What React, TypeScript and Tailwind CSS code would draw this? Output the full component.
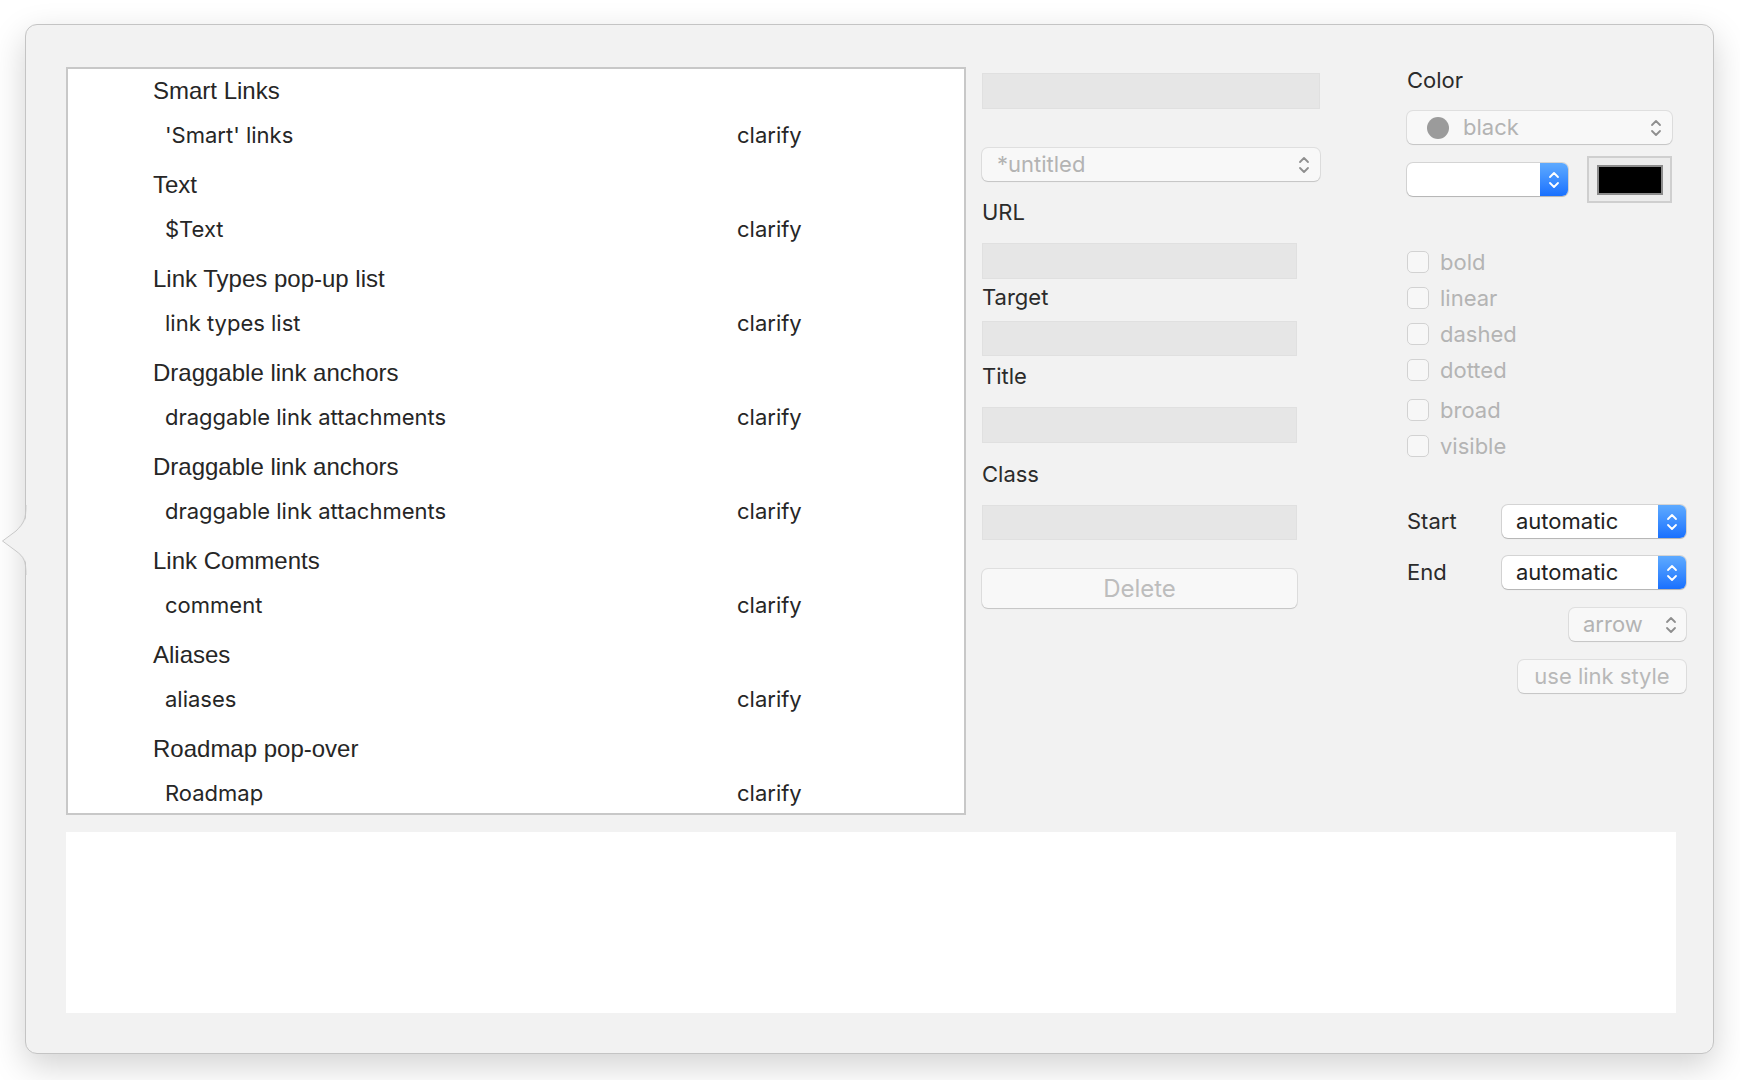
import React from "react";

// 链接检查器面板（popover），左侧为大纲列表，右侧为属性控件
const rows: { heading: string; child: string }[] = [
  { heading: "Smart Links", child: "'Smart' links" },
  { heading: "Text", child: "$Text" },
  { heading: "Link Types pop-up list", child: "link types list" },
  { heading: "Draggable link anchors", child: "draggable link attachments" },
  { heading: "Draggable link anchors", child: "draggable link attachments" },
  { heading: "Link Comments", child: "comment" },
  { heading: "Aliases", child: "aliases" },
  { heading: "Roadmap pop-over", child: "Roadmap" },
];

const sf = "font-['Inter','Liberation_Sans',sans-serif]";

const Chevrons = ({ color = "#8e8e8e" }: { color?: string }) => (
  <svg width="12" height="20" viewBox="0 0 12 20" fill="none">
    <path d="M2 7 L6 3 L10 7" stroke={color} strokeWidth="1.8" strokeLinecap="round" strokeLinejoin="round" />
    <path d="M2 13 L6 17 L10 13" stroke={color} strokeWidth="1.8" strokeLinecap="round" strokeLinejoin="round" />
  </svg>
);

const Field = ({ w, h = "h-[36px]", mt }: { w: string; h?: string; mt: string }) => (
  <div className={`${w} ${h} ${mt} bg-[#e6e6e6] border border-[#e0e0e0]`} />
);

const Label = ({ text, mt }: { text: string; mt: string }) => (
  <div className={`${mt} h-[26px] leading-[26px] text-[22px] text-[#2b2b2b] ${sf}`}>{text}</div>
);

const BluePopup = ({ value, w }: { value: string; w: string }) => (
  <div className={`${w} h-[33px] flex rounded-[6px] bg-white shadow-[0_0_0_1px_rgba(0,0,0,0.12),0_1px_1px_rgba(0,0,0,0.15)] overflow-hidden`}>
    <div className={`flex-1 flex items-center pl-[14px] text-[22px] text-[#222] ${sf}`}>{value}</div>
    <div className="w-[28px] flex items-center justify-center bg-gradient-to-b from-[#5eaaff] to-[#1970fe]">
      <Chevrons color="#ffffff" />
    </div>
  </div>
);

const Check = ({ label }: { label: string }) => (
  <div className="h-[36px] flex items-center">
    <div className="w-[22px] h-[22px] rounded-[5px] bg-[#f7f7f7] border border-[#d2d2d2]" />
    <span className={`ml-[11px] text-[22px] text-[#b4b4b4] ${sf}`}>{label}</span>
  </div>
);

export default function App() {
  return (
    <div className="w-[1740px] h-[1080px] bg-white overflow-hidden pt-[24px] pl-[25px]">
      <div className="relative w-[1689px] h-[1030px] bg-[#f2f2f2] rounded-[12px] border border-[#c4c4c4] shadow-[0_12px_34px_rgba(0,0,0,0.18)] pl-[40px] pt-[42px]">
        {/* popover 箭头 */}
        <svg className="absolute left-[-25px] top-[480px]" width="27" height="70" viewBox="0 0 27 70">
          <path d="M26 0 C26 14 24 18 16 26 L2 36 L16 46 C24 52 26 56 26 70 Z" fill="#f2f2f2" />
          <path d="M25 0 C25 14 23 18 15 26 L1.5 36 L15 46 C23 52 25 56 25 70" fill="none" stroke="#c9c9c9" strokeWidth="1" />
        </svg>

        <div className="flex">
          {/* 大纲列表 */}
          <div className="w-[900px] h-[748px] bg-white border-2 border-[#c8c8c8] overflow-hidden">
            {rows.map((r, i) => (
              <React.Fragment key={i}>
                <div className="h-[44px] flex items-center pl-[85px] text-[24px] text-[#262626] font-['Liberation_Sans',sans-serif]">
                  {r.heading}
                </div>
                <div className={`h-[50px] pb-[5px] flex items-center text-[22px] text-[#262626] ${sf}`}>
                  <span className="pl-[97px] w-[669px]">{r.child}</span>
                  <span>clarify</span>
                </div>
              </React.Fragment>
            ))}
          </div>

          {/* 中间列 */}
          <div className="ml-[16px] w-[338px] flex flex-col">
            <Field w="w-[338px]" mt="mt-[6px]" />
            <div className="mt-[39px] w-[338px] h-[33px] flex items-center justify-between pl-[15px] pr-[10px] rounded-[6px] bg-[#f8f8f8] shadow-[0_0_0_1px_rgba(0,0,0,0.08),0_1px_1px_rgba(0,0,0,0.12)]">
              <span className={`text-[22px] text-[#b3b3b3] ${sf}`}>*untitled</span>
              <Chevrons />
            </div>
            <Label text="URL" mt="mt-[18px]" />
            <Field w="w-[315px]" mt="mt-[18px]" />
            <Label text="Target" mt="mt-[5px]" />
            <Field w="w-[315px]" h="h-[35px]" mt="mt-[11px]" />
            <Label text="Title" mt="mt-[7px]" />
            <Field w="w-[315px]" mt="mt-[18px]" />
            <Label text="Class" mt="mt-[18px]" />
            <Field w="w-[315px]" h="h-[35px]" mt="mt-[18px]" />
            <div className={`mt-[29px] w-[315px] h-[39px] flex items-center justify-center rounded-[6px] bg-[#f8f8f8] shadow-[0_0_0_1px_rgba(0,0,0,0.08),0_1px_1px_rgba(0,0,0,0.12)] text-[24px] text-[#bdbdbd] ${sf}`}>
              Delete
            </div>
          </div>

          {/* 右侧列 */}
          <div className="ml-[87px] w-[279px] flex flex-col">
            <Label text="Color" mt="mt-[0px]" />
            <div className="mt-[18px] w-[265px] h-[33px] flex items-center justify-between pl-[20px] pr-[10px] rounded-[6px] bg-[#f8f8f8] shadow-[0_0_0_1px_rgba(0,0,0,0.08),0_1px_1px_rgba(0,0,0,0.12)]">
              <div className="flex items-center">
                <div className="w-[22px] h-[22px] rounded-full bg-[#9b9b9b]" />
                <span className={`ml-[14px] text-[22px] text-[#b3b3b3] ${sf}`}>black</span>
              </div>
              <Chevrons />
            </div>
            <div className="mt-[12px] flex items-center">
              <BluePopup value="" w="w-[161px]" />
              <div className="ml-[19px] w-[85px] h-[47px] border-2 border-[#cfcfcf] bg-[#ececec] flex items-center justify-center">
                <div className="w-[66px] h-[30px] bg-black border-2 border-[#8c8c8c]" />
              </div>
            </div>
            <div className="mt-[41px] flex flex-col">
              <Check label="bold" />
              <Check label="linear" />
              <Check label="dashed" />
              <Check label="dotted" />
              <div className="mt-[4px]" />
              <Check label="broad" />
              <Check label="visible" />
            </div>
            <div className="mt-[41px] flex items-center justify-between">
              <span className={`text-[22px] text-[#2b2b2b] ${sf}`}>Start</span>
              <BluePopup value="automatic" w="w-[184px]" />
            </div>
            <div className="mt-[18px] flex items-center justify-between">
              <span className={`text-[22px] text-[#2b2b2b] ${sf}`}>End</span>
              <BluePopup value="automatic" w="w-[184px]" />
            </div>
            <div className="mt-[19px] flex justify-end">
              <div className="w-[117px] h-[33px] flex items-center justify-between pl-[14px] pr-[9px] rounded-[6px] bg-[#f8f8f8] shadow-[0_0_0_1px_rgba(0,0,0,0.08),0_1px_1px_rgba(0,0,0,0.12)]">
                <span className={`text-[22px] text-[#b3b3b3] ${sf}`}>arrow</span>
                <Chevrons />
              </div>
            </div>
            <div className="mt-[19px] flex justify-end">
              <div className={`w-[168px] h-[33px] flex items-center justify-center rounded-[6px] bg-[#f8f8f8] shadow-[0_0_0_1px_rgba(0,0,0,0.08),0_1px_1px_rgba(0,0,0,0.12)] text-[22px] text-[#b8b8b8] ${sf}`}>
                use link style
              </div>
            </div>
          </div>
        </div>

        {/* 底部文本区域 */}
        <div className="mt-[17px] w-[1610px] h-[181px] bg-white" />
      </div>
    </div>
  );
}
